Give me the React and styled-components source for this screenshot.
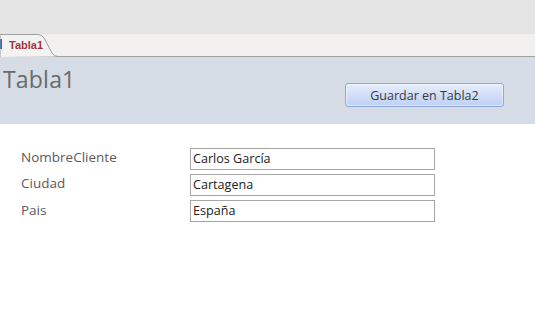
import React from 'react';
import styled, { createGlobalStyle } from 'styled-components';

const GlobalStyle = createGlobalStyle`
  html, body {
    margin: 0;
    padding: 0;
    background: #ffffff;
  }
  body {
    width: 535px;
    height: 310px;
    overflow: hidden;
    font-family: 'Open Sans', 'Noto Sans', sans-serif;
  }
`;

const Ribbon = styled.div`
  height: 34px;
  background: #e4e4e4;
`;

const TabStrip = styled.div`
  display: flex;
  align-items: flex-end;
  height: 22px;
  background: #f2f1ef;
  border-bottom: 1px solid #a0a0a0;
`;

const Tab = styled.div`
  position: relative;
  display: flex;
  align-items: center;
  width: 58px;
  height: 23px;
  margin-bottom: -1px;
  padding-left: 9px;
  box-sizing: border-box;

  svg {
    position: absolute;
    left: 0;
    top: 0;
  }

  &:before {
    content: '';
    position: absolute;
    left: 0;
    top: 5px;
    width: 2px;
    height: 10px;
    background: linear-gradient(90deg, #5a7bb8 0 1px, #c23a3a 1px 2px);
    z-index: 1;
  }
`;

const TabLabel = styled.span`
  position: relative;
  font-family: 'Liberation Sans', Arial, sans-serif;
  font-size: 11px;
  font-weight: bold;
  color: #a3343c;
  margin-top: -2px;
`;

const Header = styled.header`
  display: flex;
  justify-content: space-between;
  align-items: flex-start;
  height: 67px;
  background: #d5dce6;
  padding: 0 31px 0 3px;
`;

const Title = styled.h1`
  margin: 6px 0 0;
  font-size: 23px;
  font-weight: normal;
  color: #6a6a6a;
  letter-spacing: 0.2px;
`;

const Button = styled.button`
  margin-top: 26px;
  width: 159px;
  height: 24px;
  border: 1px solid #8ea6da;
  border-radius: 3px;
  background: linear-gradient(#e6edfc, #bfd0f5);
  font-family: 'Open Sans', 'Noto Sans', sans-serif;
  font-size: 12.5px;
  color: #3a3a3a;
  padding: 0;
  box-shadow: inset 0 0 0 1px rgba(255, 255, 255, 0.5);
`;

const Form = styled.div`
  display: grid;
  grid-template-columns: 169px 245px;
  row-gap: 4px;
  padding: 24px 0 0 21px;
`;

const Label = styled.div`
  font-size: 13.5px;
  color: #5e5a58;
  line-height: 18px;
  margin-top: ${({ $offset }) => $offset}px;
`;

const Field = styled.div`
  height: 22px;
  box-sizing: border-box;
  border: 1px solid #a6a6a6;
  padding: 0 2px;
  font-size: 12.6px;
  line-height: 20px;
  color: #222;
`;

const rows = [
  { label: 'NombreCliente', value: 'Carlos García', offset: 0 },
  { label: 'Ciudad', value: 'Cartagena', offset: 0 },
  { label: 'Pais', value: 'España', offset: 1 },
];

const App = () => (
  <>
    <GlobalStyle />
    <Ribbon />
    <TabStrip>
      <Tab>
        <svg width="58" height="23" viewBox="0 0 58 23">
          <path
            d="M0 23 V0.5 H38 Q42 0.5 44 4 L52 19 Q54 22.5 58 22.5"
            fill="#f4f3f1"
            stroke="#a0a0a0"
            strokeWidth="1"
          />
        </svg>
        <TabLabel>Tabla1</TabLabel>
      </Tab>
    </TabStrip>
    <Header>
      <Title>Tabla1</Title>
      <Button>Guardar en Tabla2</Button>
    </Header>
    <Form>
      {rows.map((r) => (
        <React.Fragment key={r.label}>
          <Label $offset={r.offset}>{r.label}</Label>
          <Field>{r.value}</Field>
        </React.Fragment>
      ))}
    </Form>
  </>
);

export default App;
